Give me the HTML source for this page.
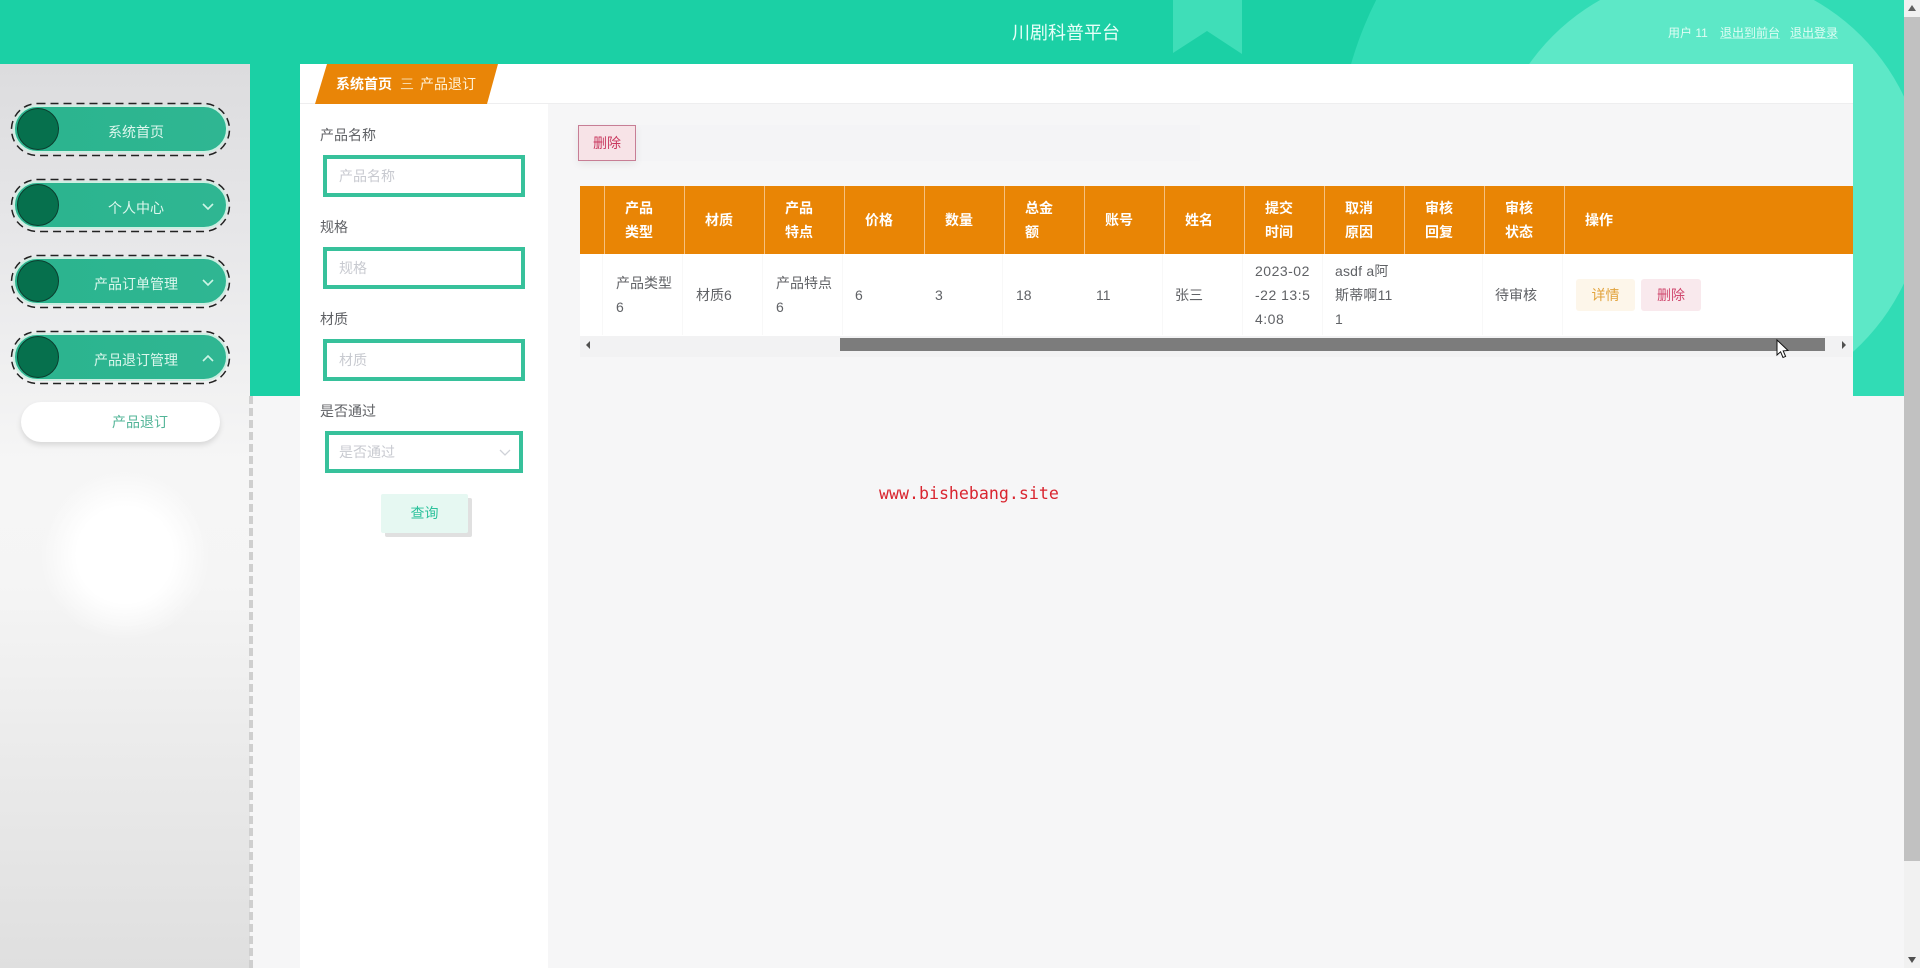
<!DOCTYPE html>
<html lang="zh-CN">
<head>
<meta charset="utf-8">
<title>川剧科普平台</title>
<style>
html,body{margin:0;padding:0;width:1920px;height:968px;overflow:hidden;background:#f6f6f7;}
body{position:relative;font-family:"Liberation Sans","Noto Sans CJK SC",sans-serif;font-size:14px;color:#606266;}
div,a,span{box-sizing:border-box;}
.a{position:absolute;}
.t{position:absolute;white-space:nowrap;line-height:24px;}
.th{position:absolute;white-space:nowrap;line-height:24px;color:#fff;font-weight:700;}
.sep{position:absolute;top:186px;width:1px;height:68px;background:#f6c07e;}
.sep2{position:absolute;top:254px;width:1px;height:81px;background:#f8f8f8;}
.lab{position:absolute;left:320px;line-height:24px;color:#606266;white-space:nowrap;}
.inp{position:absolute;border:4px solid #37c19b;background:#fff;color:#c8cad0;line-height:34px;padding-left:12px;}
.pill{position:absolute;left:13px;width:215px;height:48px;border-radius:24px;background:linear-gradient(90deg,#2bb48e,#2fb692);border:2px solid #cdeee2;}
.circ{position:absolute;left:17px;width:42px;height:42px;border-radius:50%;background:#06704d;border:1.5px solid #0c3d2e;}
.mt{position:absolute;left:36px;width:200px;text-align:center;color:#dcf7ed;line-height:24px;}
</style>
</head>
<body>

<!-- teal background with header shapes -->
<svg class="a" style="left:0;top:0" width="1904" height="396" viewBox="0 0 1904 396">
  <defs><clipPath id="c"><rect width="1904" height="396"/></clipPath></defs>
  <rect width="1904" height="396" fill="#1bd0a5"/>
  <g clip-path="url(#c)">
    <polygon points="1173,0 1242,0 1242,54 1207,31 1173,53" fill="#3fdeb8"/>
    <circle cx="1700" cy="164" r="363" fill="#31dcb5"/>
    <circle cx="1707" cy="190" r="218" fill="#5de8c7"/>
  </g>
</svg>

<!-- header text -->
<div class="a" style="left:1012px;top:19px;font-size:18px;line-height:28px;color:#e6fff8;white-space:nowrap">川剧科普平台</div>
<div class="a" style="left:1668px;top:23px;font-size:12px;line-height:20px;color:#dffdf4;white-space:nowrap">用户 11</div>
<div class="a" style="left:1720px;top:23px;font-size:12px;line-height:20px;color:#dffdf4;white-space:nowrap;text-decoration:underline;text-decoration-color:rgba(223,253,244,.45)">退出到前台</div>
<div class="a" style="left:1790px;top:23px;font-size:12px;line-height:20px;color:#dffdf4;white-space:nowrap;text-decoration:underline;text-decoration-color:rgba(223,253,244,.45)">退出登录</div>

<!-- sidebar -->
<div class="a" style="left:0;top:64px;width:250px;height:904px;background:radial-gradient(circle at 125px 491px,#ffffff 0,#ffffff 48px,rgba(255,255,255,0) 85px),linear-gradient(180deg,#dcdcde 0,#e6e6e8 160px,#f6f6f6 400px,#f5f5f5 520px,#e9e9e9 720px,#dfdfdf 904px)"></div>
<div class="a" style="left:249px;top:396px;width:0;height:572px;border-left:4px dashed #cfcfcf"></div>

<svg class="a" style="left:0;top:0" width="250" height="400" viewBox="0 0 250 400" fill="none">
  <rect x="11.5" y="103.5" width="218" height="52" rx="26" stroke="#222" stroke-width="1.5" stroke-dasharray="8 5"/>
  <rect x="11.5" y="179.5" width="218" height="52" rx="26" stroke="#222" stroke-width="1.5" stroke-dasharray="8 5"/>
  <rect x="11.5" y="255.5" width="218" height="52" rx="26" stroke="#222" stroke-width="1.5" stroke-dasharray="8 5"/>
  <rect x="11.5" y="331.5" width="218" height="52" rx="26" stroke="#222" stroke-width="1.5" stroke-dasharray="8 5"/>
</svg>

<div class="pill" style="top:105px"></div><div class="circ" style="top:108px"></div><div class="mt" style="top:120px">系统首页</div>
<div class="pill" style="top:181px"></div><div class="circ" style="top:184px"></div><div class="mt" style="top:196px">个人中心</div>
<div class="pill" style="top:257px"></div><div class="circ" style="top:260px"></div><div class="mt" style="top:272px">产品订单管理</div>
<div class="pill" style="top:333px"></div><div class="circ" style="top:336px"></div><div class="mt" style="top:348px">产品退订管理</div>

<svg class="a" style="left:202px;top:200px" width="12" height="14" viewBox="0 0 12 14" fill="none"><path d="M1 4L6 9L11 4" stroke="#cdf5e6" stroke-width="1.6"/></svg>
<svg class="a" style="left:202px;top:276px" width="12" height="14" viewBox="0 0 12 14" fill="none"><path d="M1 4L6 9L11 4" stroke="#cdf5e6" stroke-width="1.6"/></svg>
<svg class="a" style="left:202px;top:352px" width="12" height="14" viewBox="0 0 12 14" fill="none"><path d="M1 9L6 4L11 9" stroke="#cdf5e6" stroke-width="1.6"/></svg>

<div class="a" style="left:21px;top:402px;width:199px;height:40px;border-radius:20px;background:#fff;box-shadow:0 3px 6px rgba(0,0,0,.12)"></div>
<div class="a" style="left:40px;top:410px;width:200px;text-align:center;line-height:24px;color:#52b497">产品退订</div>

<!-- breadcrumb bar -->
<div class="a" style="left:300px;top:64px;width:1553px;height:40px;background:#fff;border-bottom:1px solid #eeeeef"></div>
<svg class="a" style="left:300px;top:64px" width="210" height="40" viewBox="0 0 210 40"><polygon points="27,0 198,0 187,40 15,40" fill="#e98507"/></svg>
<div class="a" style="left:336px;top:72px;line-height:24px;font-weight:700;color:#fff;white-space:nowrap">系统首页</div>
<div class="a" style="left:400px;top:72px;line-height:24px;color:#f7d9a8;white-space:nowrap">三</div>
<div class="a" style="left:420px;top:72px;line-height:24px;color:#fff3d8;white-space:nowrap">产品退订</div>

<!-- grey content area -->
<div class="a" style="left:548px;top:104px;width:1305px;height:292px;background:#f6f6f7"></div>

<!-- form panel -->
<div class="a" style="left:300px;top:104px;width:248px;height:864px;background:#fff"></div>
<div class="lab" style="top:123px">产品名称</div>
<div class="inp" style="left:323px;top:155px;width:202px;height:42px">产品名称</div>
<div class="lab" style="top:215px">规格</div>
<div class="inp" style="left:323px;top:247px;width:202px;height:42px">规格</div>
<div class="lab" style="top:307px">材质</div>
<div class="inp" style="left:323px;top:339px;width:202px;height:42px">材质</div>
<div class="lab" style="top:399px">是否通过</div>
<div class="inp" style="left:325px;top:431px;width:198px;height:42px;padding-left:10px">是否通过</div>
<svg class="a" style="left:498px;top:447px" width="14" height="12" viewBox="0 0 14 12" fill="none"><path d="M2 3L7 8L12 3" stroke="#cfd2d8" stroke-width="1.3"/></svg>
<div class="a" style="left:381px;top:494px;width:87px;height:39px;background:#e6f8f2;box-shadow:4px 4px 0 #e0e0e0;border-radius:2px;text-align:center;line-height:38px;color:#2bc19b">查询</div>

<!-- delete toolbar -->
<div class="a" style="left:637px;top:125px;width:563px;height:36px;background:#f4f4f6"></div>
<div class="a" style="left:578px;top:125px;width:58px;height:36px;background:#f7e3e7;border:1px solid #c77e95;box-shadow:0 3px 8px rgba(0,0,0,.07);text-align:center;line-height:34px;color:#c9395f">删除</div>

<!-- table header -->
<div class="a" style="left:580px;top:186px;width:1273px;height:68px;background:#e98505"></div>
<div class="sep" style="left:604px"></div><div class="sep" style="left:684px"></div><div class="sep" style="left:764px"></div><div class="sep" style="left:844px"></div><div class="sep" style="left:924px"></div><div class="sep" style="left:1004px"></div><div class="sep" style="left:1084px"></div><div class="sep" style="left:1164px"></div><div class="sep" style="left:1244px"></div><div class="sep" style="left:1324px"></div><div class="sep" style="left:1404px"></div><div class="sep" style="left:1484px"></div><div class="sep" style="left:1564px"></div>

<div class="th" style="left:625px;top:196px">产品<br>类型</div>
<div class="th" style="left:705px;top:208px">材质</div>
<div class="th" style="left:785px;top:196px">产品<br>特点</div>
<div class="th" style="left:865px;top:208px">价格</div>
<div class="th" style="left:945px;top:208px">数量</div>
<div class="th" style="left:1025px;top:196px">总金<br>额</div>
<div class="th" style="left:1105px;top:208px">账号</div>
<div class="th" style="left:1185px;top:208px">姓名</div>
<div class="th" style="left:1265px;top:196px">提交<br>时间</div>
<div class="th" style="left:1345px;top:196px">取消<br>原因</div>
<div class="th" style="left:1425px;top:196px">审核<br>回复</div>
<div class="th" style="left:1505px;top:196px">审核<br>状态</div>
<div class="th" style="left:1585px;top:208px">操作</div>

<!-- table row -->
<div class="a" style="left:580px;top:254px;width:1273px;height:82px;background:#fff"></div>
<div class="sep2" style="left:602px"></div><div class="sep2" style="left:682px"></div><div class="sep2" style="left:762px"></div><div class="sep2" style="left:842px"></div><div class="sep2" style="left:1002px"></div><div class="sep2" style="left:1162px"></div><div class="sep2" style="left:1242px"></div><div class="sep2" style="left:1322px"></div><div class="sep2" style="left:1482px"></div><div class="sep2" style="left:1562px"></div>

<div class="t" style="left:616px;top:271px">产品类型<br>6</div>
<div class="t" style="left:696px;top:283px">材质6</div>
<div class="t" style="left:776px;top:271px">产品特点<br>6</div>
<div class="t" style="left:855px;top:283px">6</div>
<div class="t" style="left:935px;top:283px">3</div>
<div class="t" style="left:1016px;top:283px">18</div>
<div class="t" style="left:1096px;top:283px">11</div>
<div class="t" style="left:1175px;top:283px">张三</div>
<div class="t" style="left:1255px;top:259px;letter-spacing:.5px">2023-02<br>-22 13:5<br>4:08</div>
<div class="t" style="left:1335px;top:259px;letter-spacing:.2px">asdf a阿<br>斯蒂啊11<br>1</div>
<div class="t" style="left:1495px;top:283px">待审核</div>
<div class="a" style="left:1576px;top:279px;width:59px;height:32px;background:#fdf6ea;border-radius:3px;text-align:center;line-height:32px;color:#e2a33c">详情</div>
<div class="a" style="left:1641px;top:279px;width:60px;height:32px;background:#f9e9ed;border-radius:3px;text-align:center;line-height:32px;color:#d0486e">删除</div>

<!-- table horizontal scrollbar -->
<div class="a" style="left:580px;top:336px;width:1272px;height:21px;background:#f2f2f3"></div>
<div class="a" style="left:840px;top:338px;width:985px;height:13px;background:#7c7c7c"></div>
<svg class="a" style="left:584px;top:340px" width="8" height="10" viewBox="0 0 8 10"><polygon points="6,1 2,5 6,9" fill="#505050"/></svg>
<svg class="a" style="left:1840px;top:340px" width="8" height="10" viewBox="0 0 8 10"><polygon points="2,1 6,5 2,9" fill="#505050"/></svg>

<!-- watermark -->
<div class="a" style="left:879px;top:482px;font-family:'DejaVu Sans Mono','Liberation Mono',monospace;font-size:16.6px;line-height:24px;color:#d9252f;white-space:nowrap">www.bishebang.site</div>

<!-- mouse cursor -->
<svg class="a" style="left:1776px;top:339px" width="14" height="21" viewBox="0 0 14 21"><path d="M1 1L1 16L4.6 12.8L7 18.5L9.6 17.4L7.2 11.9L12 11.5Z" fill="#fff" stroke="#111" stroke-width="1"/></svg>

<!-- page scrollbar -->
<div class="a" style="left:1904px;top:0;width:16px;height:968px;background:#f1f1f1"></div>
<div class="a" style="left:1904px;top:17px;width:16px;height:844px;background:#c1c1c1"></div>
<svg class="a" style="left:1904px;top:0" width="16" height="17" viewBox="0 0 16 17"><polygon points="8,5 12,11 4,11" fill="#606060"/></svg>
<svg class="a" style="left:1904px;top:951px" width="16" height="17" viewBox="0 0 16 17"><polygon points="4,6 12,6 8,12" fill="#505050"/></svg>

</body>
</html>
